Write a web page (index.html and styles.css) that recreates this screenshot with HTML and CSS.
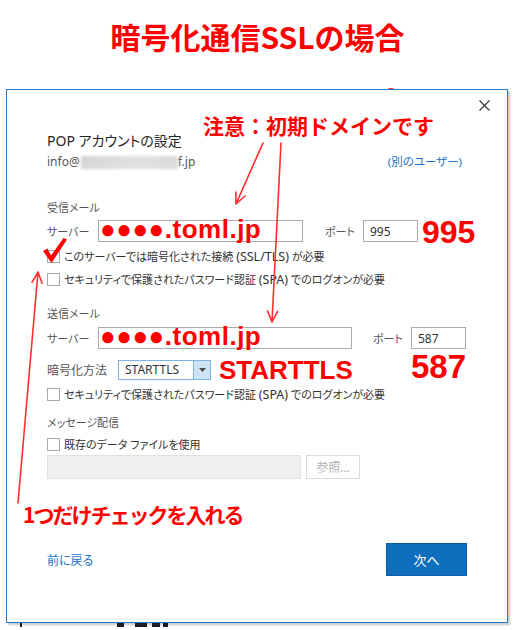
FILE: index.html
```html
<!DOCTYPE html>
<html lang="ja">
<head>
<meta charset="utf-8">
<title>暗号化通信SSLの場合</title>
<link rel="stylesheet" href="styles.css">
</head>
<body>
<h1 class="title">暗号化通信SSLの場合</h1>

<div class="dialog">
  <div class="titlebar">
    <svg class="close" width="11" height="11" viewBox="0 0 11 11"><path d="M0.5 0.5 L10.5 10.5 M10.5 0.5 L0.5 10.5" stroke="#333" stroke-width="1.1" fill="none"/></svg>
  </div>
  <div class="content">
    <div class="heading">POP アカウントの設定</div>
    <div class="info">
      <span class="addr">info@<span class="blur"></span>f.jp</span>
      <span class="link other">(別のユーザー)</span>
    </div>

    <div class="section first">受信メール</div>
    <div class="row srv">
      <span class="lbl">サーバー</span>
      <div class="input host1"><span class="redhost">●●●●.toml.jp</span></div>
      <span class="lbl port-lbl p1">ポート</span>
      <div class="input port">995</div>
      <span class="bignum n995">995</span>
    </div>
    <div class="check c1"><span class="box"></span><span>このサーバーでは暗号化された接続 <span class="lat">(SSL/TLS)</span> が必要</span></div>
    <div class="check c2"><span class="box"></span><span>セキュリティで保護されたパスワード認証 <span class="lat">(SPA)</span> でのログオンが必要</span></div>

    <div class="section second">送信メール</div>
    <div class="row srv r2">
      <span class="lbl">サーバー</span>
      <div class="input host2"><span class="redhost">●●●●.toml.jp</span></div>
      <span class="lbl port-lbl p2">ポート</span>
      <div class="portwrap">
        <div class="input port">587</div>
        <span class="bignum n587">587</span>
      </div>
    </div>
    <div class="row enc">
      <span class="lbl enc-lbl">暗号化方法</span>
      <div class="select">
        <span class="sel-text">STARTTLS</span>
        <span class="sel-btn"><svg width="7" height="4" viewBox="0 0 7 4"><path d="M0 0 H7 L3.5 4 Z" fill="#4a4a4a"/></svg></span>
      </div>
      <span class="redtls">STARTTLS</span>
    </div>
    <div class="check c3"><span class="box"></span><span>セキュリティで保護されたパスワード認証 <span class="lat">(SPA)</span> でのログオンが必要</span></div>

    <div class="section third">メッセージ配信</div>
    <div class="check c4"><span class="box"></span><span>既存のデータ ファイルを使用</span></div>
    <div class="row file">
      <div class="input disabled"></div>
      <div class="browse">参照...</div>
    </div>

    <div class="footer">
      <span class="link back">前に戻る</span>
      <div class="next">次へ</div>
    </div>
  </div>
</div>
<div class="under">
  <span class="m m1"></span><span class="m m2"></span><span class="m m3"></span><span class="m m4"></span><span class="m m5"></span>
</div>

<div class="note note-domain">注意：初期ドメインです</div>
<div class="note note-one">1つだけチェックを入れる</div>

<svg class="overlay" width="515" height="630" viewBox="0 0 515 630">
  <g stroke="#ff2f2f" stroke-width="1.6" fill="none" stroke-linecap="round">
    <path d="M263 143 L236 204 M236 204 L245 196 M236 204 L235.8 192"/>
    <path d="M281 143 L272 322 M272 322 L277.6 311.4 M272 322 L267.5 310.9"/>
    <path d="M18 503 L38 272 M38 272 L32 282.4 M38 272 L42.1 283.3"/>
    <path d="M389 88.5 L393 88.5" stroke-width="1.2"/>
  </g>
  <path d="M43 251 L47.5 248.5 L51 255.5 L63.5 238 L67 239.5 L51.5 263 Z" fill="#ff0000"/>
</svg>
</body>
</html>
```
FILE: styles.css
```css
* { box-sizing: border-box; }
html, body { margin: 0; padding: 0; }
body {
  width: 515px;
  height: 630px;
  position: relative;
  overflow: hidden;
  background: #ffffff;
  font-family: "Noto Sans", "Noto Sans CJK JP", sans-serif;
  font-feature-settings: "palt";
}

.title {
  margin: 0;
  padding-top: 21px;
  height: 51px;
  line-height: 30px;
  text-align: center;
  font-family: "Noto Sans CJK JP", sans-serif;
  font-weight: 700;
  font-size: 30px;
  color: #ff0000;
  font-feature-settings: normal;
}

.dialog {
  margin: 38px 0 0 6px;
  width: 502px;
  height: 534px;
  border: 1px solid #2a79c4;
  background: #ffffff;
  box-shadow: 2px 2px 2px rgba(0, 0, 0, 0.22);
}

.titlebar {
  height: 30px;
  display: flex;
  justify-content: flex-end;
  align-items: center;
  padding-right: 17px;
}
.close { display: block; }

.content {
  padding: 0 40px;
  font-size: 11px;
  color: #444;
}

.heading {
  margin-top: 11px;
  line-height: 20px;
  font-size: 14px;
  color: #262626;
}

.info {
  margin-top: 1px;
  line-height: 20px;
  display: flex;
  justify-content: space-between;
  align-items: center;
  font-size: 12px;
  color: #555;
}
.addr { display: flex; align-items: center; }
.blur {
  display: inline-block;
  width: 97px;
  height: 13px;
  margin-left: 1px;
  background: linear-gradient(90deg, #d6d6d6, #e2e2e2 60%, #d9d9d9);
  filter: blur(1.5px);
}
.link { color: #1b73c7; }
.other { margin-right: 5px; font-size: 11.5px; }

.section { line-height: 20px; color: #555; font-size: 11px; }
.section.first { margin-top: 26px; }
.section.second { margin-top: 15px; }
.section.third { margin-top: 9px; }

.row { display: flex; align-items: center; }
.row > * { flex: none; }
.srv { height: 22px; margin-top: 2px; }
.srv.r2 { margin-top: 3px; }
.lbl { width: 51px; color: #555; white-space: nowrap; }
.port-lbl { width: 38px; }
.p1 { margin-left: 22px; }
.p2 { margin-left: 21px; }

.input {
  height: 22px;
  border: 1px solid #ababab;
  background: #fff;
  display: flex;
  align-items: center;
}
.host1 { width: 205px; }
.host2 { width: 254px; }
.port { width: 55px; padding-left: 6px; font-size: 12px; color: #333; }

.redhost {
  font-family: "Liberation Sans", Arial, sans-serif;
  font-weight: 700;
  font-size: 26px;
  line-height: 20px;
  letter-spacing: 0.5px;
  color: #ff0000;
  margin: -4px 0 0 1px;
  white-space: nowrap;
  font-feature-settings: normal;
}

.bignum {
  font-family: "Liberation Sans", Arial, sans-serif;
  font-weight: 700;
  color: #ff0000;
  font-feature-settings: normal;
}
.n995 { font-size: 32px; line-height: 22px; margin: 2px 0 0 4px; }
.portwrap { position: relative; }
.n587 {
  position: absolute;
  left: 0;
  top: 23px;
  font-size: 33px;
  line-height: 33px;
}

.check {
  height: 20px;
  display: flex;
  align-items: center;
  gap: 4px;
  color: #333;
  white-space: nowrap;
  font-size: 11px;
}
.lat { font-size: 12.5px; }
.box {
  width: 13px;
  height: 13px;
  border: 1px solid #a9a9a9;
  background: #fff;
  flex: none;
}
.c1 { margin-top: 4px; }
.c2 { margin-top: 3px; }
.c3 { margin-top: 4px; }
.c4 { margin-top: 1px; font-size: 11px; }

.enc { height: 20px; margin-top: 11px; }
.enc-lbl { width: 71px; font-size: 12px; }
.select {
  width: 93px;
  height: 20px;
  border: 1px solid #7db3e8;
  display: flex;
  align-items: stretch;
}
.sel-text {
  flex: 1;
  padding-left: 6px;
  line-height: 18px;
  font-size: 12px;
  color: #333;
}
.sel-btn {
  width: 17px;
  background: #cde4f7;
  border-left: 1px solid #7db3e8;
  display: flex;
  align-items: center;
  justify-content: center;
}
.sel-btn svg { display: block; }
.redtls {
  margin-left: 8px;
  font-family: "Liberation Sans", Arial, sans-serif;
  font-weight: 700;
  font-size: 26px;
  line-height: 20px;
  color: #ff0000;
  font-feature-settings: normal;
}

.file { margin-top: 1px; height: 24px; }
.disabled {
  width: 254px;
  height: 24px;
  background: #efefef;
  border-color: #e0e0e0;
}
.browse {
  margin-left: 5px;
  width: 54px;
  height: 24px;
  border: 1px solid #dcdcdc;
  background: #fff;
  color: #b3b3b3;
  font-size: 12px;
  display: flex;
  align-items: center;
  justify-content: center;
}

.footer {
  margin-top: 64px;
  display: flex;
  justify-content: space-between;
  align-items: center;
}
.back { font-size: 12px; }
.next {
  width: 81px;
  height: 33px;
  background: #106ebe;
  border: 1px solid #0c5ba3;
  color: #fff;
  font-size: 13px;
  display: flex;
  align-items: center;
  justify-content: center;
}

.under {
  display: flex;
  align-items: flex-start;
  height: 8px;
}
.m { display: block; background: #1a1a2a; height: 4px; }
.m1 { width: 2px; margin-left: 20px; }
.m2 { width: 7px; margin-left: 95px; }
.m3 { width: 12px; margin-left: 11px; }
.m4 { width: 8px; margin-left: 5px; }
.m5 { width: 5px; margin-left: 3px; }

.note {
  position: absolute;
  font-family: "Noto Sans CJK JP", sans-serif;
  font-weight: 700;
  color: #ff0000;
  white-space: nowrap;
  font-feature-settings: normal;
}
.note-domain {
  left: 203px;
  top: 113px;
  font-size: 21px;
  line-height: 24px;
}
.note-one {
  left: 23px;
  top: 502px;
  font-size: 21px;
  line-height: 24px;
  letter-spacing: -2px;
}

.overlay {
  position: absolute;
  left: 0;
  top: 0;
  pointer-events: none;
}
```
